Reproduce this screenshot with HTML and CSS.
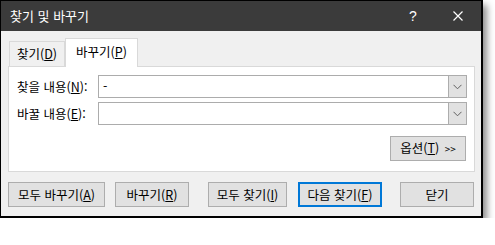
FILE: index.html
```html
<!DOCTYPE html>
<html lang="ko">
<head>
    <meta charset="UTF-8">
    <title>찾기 및 바꾸기</title>
    <link rel="stylesheet" href="styles.css">
</head>
<body>

    <div class="dialog">
        <div class="title-bar">
            <span class="title">찾기 및 바꾸기</span>
            <span class="help">?</span>
            <span class="close">
                <svg width="10" height="10" viewBox="0 0 10 10"><path d="M0.5 0.5L9.5 9.5M9.5 0.5L0.5 9.5" stroke="#fff" stroke-width="1.2" fill="none"/></svg>
            </span>
        </div>

        <div class="dialog-body">
            <div class="tabs">
                <div class="tab">찾기(<u>D</u>)</div>
                <div class="tab active">바꾸기(<u>P</u>)</div>
            </div>

            <div class="panel">
                <div class="field-row">
                    <label class="field-label">찾을 내용(<u>N</u>):</label>
                    <div class="combo">
                        <span class="combo-text">-</span>
                        <span class="combo-btn"><svg width="9" height="6" viewBox="0 0 9 6"><path d="M0.5 0.8L4.5 4.8L8.5 0.8" stroke="#606060" fill="none"/></svg></span>
                    </div>
                </div>
                <div class="field-row">
                    <label class="field-label">바꿀 내용(<u>E</u>):</label>
                    <div class="combo">
                        <span class="combo-text"></span>
                        <span class="combo-btn"><svg width="9" height="6" viewBox="0 0 9 6"><path d="M0.5 0.8L4.5 4.8L8.5 0.8" stroke="#606060" fill="none"/></svg></span>
                    </div>
                </div>
                <div class="options-row">
                    <button class="btn btn-options">옵션(<u>T</u>) <span class="arrows">&gt;&gt;</span></button>
                </div>
            </div>

            <div class="button-row">
                <button class="btn btn-replace-all">모두 바꾸기(<u>A</u>)</button>
                <button class="btn btn-replace">바꾸기(<u>R</u>)</button>
                <button class="btn btn-find-all">모두 찾기(<u>I</u>)</button>
                <button class="btn btn-find-next default">다음 찾기(<u>F</u>)</button>
                <button class="btn btn-close">닫기</button>
            </div>
        </div>
    </div>

</body>
</html>
```

FILE: styles.css
```css
:root {
    --title-color: #3b3b3b;
    --face-color: #f0f0f0;
    --border-light: #d9d9d9;
    --input-border: #acacac;
    --button-face: #e1e1e1;
    --button-border: #adadad;
    --accent-color: #0078d7;
    --font-family: "Noto Sans CJK KR", "Noto Sans", sans-serif;
}
body, html {
    margin: 0;
    background-color: #ffffff;
    font-family: var(--font-family);
    font-size: 12.5px;
    color: #000;
}
u {
    text-decoration-thickness: 1px;
    text-underline-offset: 1px;
}

/* --- VENTANA --- */
.dialog {
    box-sizing: border-box;
    width: 483px;
    height: 218px;
    border: 1px solid #000;
    border-right-width: 2px;
    border-bottom-width: 2px;
    background-color: var(--face-color);
    box-shadow: 4px 5px 7px rgba(0, 0, 0, 0.45);
    display: flex;
    flex-direction: column;
}
.title-bar {
    height: 30px;
    flex-shrink: 0;
    display: flex;
    align-items: center;
    background-color: var(--title-color);
    color: #ffffff;
    padding-left: 9px;
}
.title {
    flex: 1;
    font-size: 13px;
    line-height: 16px;
}
.help {
    width: 20px;
    text-align: center;
    font-family: "Liberation Sans", sans-serif;
    font-size: 14px;
    margin-right: 30px;
}
.close {
    width: 10px;
    height: 10px;
    margin-right: 18px;
    display: flex;
}

/* --- CONTENIDO --- */
.dialog-body {
    padding: 7px 7px 0 7px;
}
.tabs {
    display: flex;
    align-items: flex-end;
    height: 28px;
    padding-left: 1px;
}
.tab {
    box-sizing: border-box;
    height: 25px;
    width: 56px;
    border: 1px solid var(--border-light);
    border-bottom: none;
    display: flex;
    align-items: center;
    justify-content: center;
    line-height: 16px;
}
.tab.active {
    position: relative;
    z-index: 2;
    height: 29px;
    width: 73px;
    margin-bottom: -1px;
    background-color: #ffffff;
    padding-bottom: 3px;
}
.panel {
    box-sizing: border-box;
    height: 106px;
    width: 467px;
    border: 1px solid var(--border-light);
    background-color: #ffffff;
    padding: 8px 7px 0 8px;
    display: flex;
    flex-direction: column;
    gap: 4px;
}
.field-row {
    display: flex;
    align-items: center;
}
.field-label {
    width: 81px;
    line-height: 16px;
}
.combo {
    box-sizing: border-box;
    flex: 1;
    height: 23px;
    border: 1px solid var(--input-border);
    display: flex;
    align-items: stretch;
}
.combo-text {
    flex: 1;
    padding-left: 4px;
    line-height: 20px;
}
.combo-btn {
    width: 17px;
    background-color: var(--button-face);
    border-left: 1px solid var(--button-border);
    display: flex;
    align-items: center;
    justify-content: center;
}
.options-row {
    display: flex;
    justify-content: flex-end;
    margin-top: 7px;
    padding-right: 1px;
}

/* --- BOTONES --- */
.btn {
    box-sizing: border-box;
    height: 25px;
    padding: 0;
    border: 1px solid var(--button-border);
    background-color: var(--button-face);
    font-family: var(--font-family);
    font-size: 12.5px;
    line-height: 16px;
    color: #000;
}
.btn.default {
    border: 2px solid var(--accent-color);
}
.btn-options { width: 76px; }
.arrows {
    font-size: 10px;
    margin-left: 2px;
}
.button-row {
    display: flex;
    margin-top: 10px;
}
.btn-replace-all { width: 97px; margin-left: 0; }
.btn-replace { width: 74px; margin-left: 10px; }
.btn-find-all { width: 79px; margin-left: 19px; }
.btn-find-next { width: 84px; margin-left: 11px; }
.btn-close { width: 74px; margin-left: 18px; }
```
